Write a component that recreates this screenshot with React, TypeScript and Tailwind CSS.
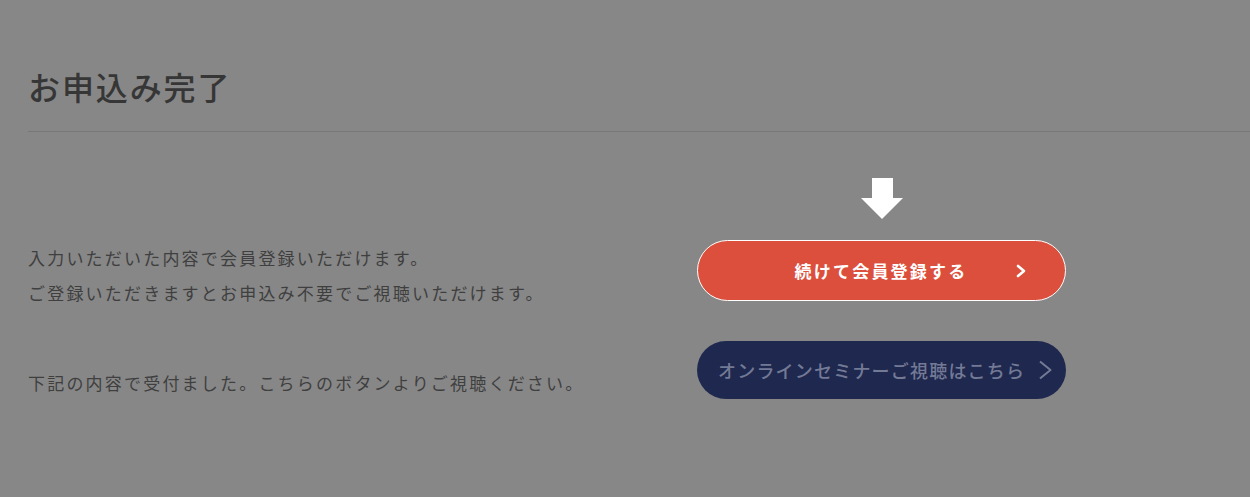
const font = { fontFamily: '"Noto Sans CJK JP", "Noto Sans", sans-serif' };

const DownArrow = () => (
  <svg width="42" height="41" viewBox="0 0 42 41" aria-hidden="true">
    <rect x="11" y="0" width="21" height="21" fill="#ffffff" />
    <polygon points="0,20 42,20 21,41" fill="#ffffff" />
  </svg>
);

const SmallChevron = () => (
  <svg width="10" height="14" viewBox="0 0 10 14" aria-hidden="true">
    <polyline points="2,2 8,7 2,12" fill="none" stroke="#ffffff" strokeWidth="2.6" strokeLinecap="round" strokeLinejoin="round" />
  </svg>
);

const ThinChevron = () => (
  <svg width="15" height="20" viewBox="0 0 15 20" aria-hidden="true">
    <polyline points="2,1.5 12.5,10 2,18.5" fill="none" stroke="#737a95" strokeWidth="2" strokeLinejoin="round" />
  </svg>
);

export default function App() {
  return (
    <div className="min-h-screen w-full overflow-hidden bg-[#878787] pt-[62px] pl-[28px]" style={font}>
      <h1 className="text-[32px] leading-[48px] font-medium tracking-[1.9px] text-[#363636]">お申込み完了</h1>
      <div className="mt-[21px] h-px w-full bg-[#777777]" />

      <div className="mt-[46px] flex items-start">
        <div className="w-[669px] pt-[62px] text-[17px] leading-[35px] tracking-[2.2px] text-[#3f3f3f]">
          <p>入力いただいた内容で会員登録いただけます。</p>
          <p>ご登録いただきますとお申込み不要でご視聴いただけます。</p>
          <p className="mt-[55px]">下記の内容で受付ました。こちらのボタンよりご視聴ください。</p>
        </div>

        <div className="flex w-[369px] flex-col items-center">
          <DownArrow />
          <button className="relative mt-[21px] flex h-[61px] w-[369px] items-center justify-center rounded-full border border-white bg-[#dc4f3d] text-[17px] font-bold tracking-[2.2px] text-white">
            <span className="pr-[1px]">続けて会員登録する</span>
            <span className="absolute right-[39px] top-1/2 flex -translate-y-1/2">
              <SmallChevron />
            </span>
          </button>
          <button className="mt-[40px] flex h-[58px] w-[369px] items-center gap-[13px] rounded-full bg-[#1f284f] pl-[21px] text-[18px] font-medium tracking-[1.2px] text-[#737a95]">
            <span>オンラインセミナーご視聴はこちら</span>
            <ThinChevron />
          </button>
        </div>
      </div>
    </div>
  );
}
